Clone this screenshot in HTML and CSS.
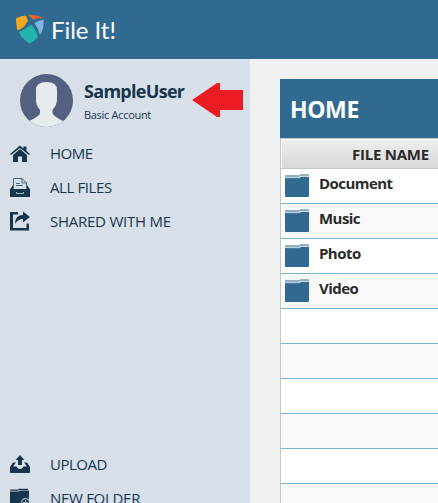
FILE: index.html
```html
<!DOCTYPE html>
<html lang="en">
<head>
<meta charset="utf-8">
<title>File It!</title>
<link rel="stylesheet" href="styles.css">
</head>
<body>
<svg class="defs" aria-hidden="true">
  <symbol id="folder" viewBox="0 0 24 23">
    <path fill="#93afc0" d="M0 2Q0 1 1 1H15V0H23Q24 0 24 1V5H0Z"/>
    <path fill="#c5dce4" d="M0 3.2H14L15 2H24V3H16L15 4H0Z"/>
    <path fill="#316a91" d="M0 4.2H14.5L16 3H24V22Q24 23 23 23H1Q0 23 0 22Z"/>
  </symbol>
</svg>
<header class="topbar">
  <svg class="logo" viewBox="0 0 28 29">
    <path fill="#f4a91c" d="M0 3.5Q5 .5 10 .5L12 6 8 11.500Q5 14 1.500 15.500Q-.2 9 0 3.500Z"/>
    <path fill="#ee6425" d="M12 0Q21-.5 27.500 3Q21 3 17 4.500Z"/>
    <path fill="#7db4e3" d="M27.500 4.500Q28.500 13 24 20Q22 13 18.500 8Q23 5 27.500 4.500Z"/>
    <path fill="#23b5ac" d="M3 17Q10 14 15 9.500Q20 14 22 22Q18 26 13.500 28.500Q6 24 3 17Z"/>
  </svg>
  <span class="brand">File It!</span>
</header>
<div class="layout">
  <aside class="sidebar">
    <div class="profile">
      <svg class="avatar" viewBox="0 0 53 53">
        <defs><clipPath id="round"><circle cx="26.500" cy="26.500" r="26.500"/></clipPath></defs>
        <g clip-path="url(#round)">
          <path fill="#555f80" d="M0 0H53V53H0Z"/>
          <path fill="#e6eced" d="M20 43V36Q15.500 31 16 25V16Q16 8 26.500 8T37 16V25Q37 31 32.500 36V39Q33 42 43 47V53H9V47Q20 42 20 39Z"/>
        </g>
      </svg>
      <div class="identity">
        <div class="username">SampleUser</div>
        <div class="plan">Basic Account</div>
      </div>
      <svg class="arrow" viewBox="0 0 52 36"><path fill="#ed1c24" d="M0 18 25 1H28V8H51V28H28V35H25Z"/></svg>
    </div>
    <nav class="menu">
      <a class="item"><svg class="icon" viewBox="0 0 20 20"><path d="M3 12 10 6 17 12V19H12V13.500H8V19H3Z"/><path d="M0 11 10 2.500 13.500 5.500V3.500H16.500V8L20 11 19 12 10 5 1 12Z"/></svg><span class="t-home">HOME</span></a>
      <a class="item"><svg class="icon" viewBox="0 0 20 20"><path d="M1 11 3 8V11H17V8L19 11 20 12V20H0V12Z"/><path class="paper" d="M3.500 12V1.500H12L16.500 6V12"/><path class="thin" d="M12 1.500V6H16.500M6 6.500H10M6 8.500H13"/><path d="M0 12H6L7 13.500H13L14 12H20V20H0Z"/><path class="light" d="M6.500 15V16.500H13.500V15"/></svg><span class="t-all">ALL FILES</span></a>
      <a class="item"><svg class="icon" viewBox="0 0 20 20"><path d="M0 1H8V3.500H3V17H16.500V12.500H19V19.500H0Z"/><path d="M5 13Q5 4 13 4V.5L20 6 13 11.500V8Q8 8 5 13Z"/></svg><span class="t-shared">SHARED WITH ME</span></a>
      <a class="item push"><svg class="icon" viewBox="0 0 20 20"><path d="M10 1 14.500 6H12V11H8V6H5.500Z"/><path d="M0 13 3 8.500H6L3 12.500H6.500Q7.500 15 10 15T13.500 12.500H17L14 8.500H17L20 13V18Q20 19 19 19H1Q0 19 0 18Z"/></svg><span class="t-upload">UPLOAD</span></a>
      <a class="item"><svg class="icon" viewBox="0 0 20 20"><path d="M0 1.500H8L9 .8H18V2H9L8 2.800H0Z"/><path d="M0 3.500H8.500L9.500 2.600H19V20H0Z"/><circle class="badge" cx="15.500" cy="14.500" r="4"/><path class="light" d="M15.500 12V17M13 14.500H18"/></svg><span class="t-new">NEW FOLDER</span></a>
    </nav>
  </aside>
  <main class="content">
    <h1 class="title"><span>HOME</span></h1>
    <div class="table">
      <div class="thead"><span>FILE NAME</span></div>
      <div class="row"><svg class="folder"><use href="#folder"/></svg><span>Document</span></div>
      <div class="row"><svg class="folder"><use href="#folder"/></svg><span>Music</span></div>
      <div class="row"><svg class="folder"><use href="#folder"/></svg><span>Photo</span></div>
      <div class="row"><svg class="folder"><use href="#folder"/></svg><span>Video</span></div>
      <div class="row"></div>
      <div class="row"></div>
      <div class="row"></div>
      <div class="row"></div>
      <div class="row"></div>
      <div class="row"></div>
    </div>
  </main>
</div>
</body>
</html>
```
FILE: styles.css
```css
* { box-sizing: border-box; }
html, body { height: 503px; overflow: hidden; }
body { margin: 0; background: #f0f2f1; color: #17364d; font-family: "Open Sans", "Noto Sans", sans-serif; white-space: nowrap; }
svg { display: block; flex: none; }
.defs { display: none; }
.topbar { height: 59px; background: #316a91; display: flex; padding: 15px 0 0 16px; }
.logo { width: 28px; height: 29px; }
.brand { margin-left: 7px; color: #fff; font: 400 24px/29px Lato, sans-serif; letter-spacing: -0.05px; }
.layout { display: flex; height: 444px; }
.sidebar { width: 250px; flex: none; background: #d7e0e8; }
.profile { height: 77px; padding: 15px 0 0 20px; display: flex; }
.avatar { width: 53px; height: 53px; }
.identity { width: 108px; margin-left: 11px; }
.username { margin-top: 5px; font-size: 18px; line-height: 24px; font-weight: 700; letter-spacing: -0.7px; }
.plan { margin-top: 5px; font-size: 11px; line-height: 14px; letter-spacing: -0.3px; }
.arrow { width: 52px; height: 36px; margin-top: 8px; }
.menu { font-size: 15px; letter-spacing: -0.5px; }
.item { display: flex; align-items: center; height: 34px; padding-left: 10px; }
.item span { margin-left: 20px; }
.push { margin-top: 209px; }
.icon { width: 20px; height: 20px; fill: #17364d; }
.paper { fill: #d7e0e8; stroke: #47637a; stroke-width: 1; }
.thin { fill: none; stroke: #47637a; stroke-width: 1; }
.light { fill: none; stroke: #a8b8c4; stroke-width: 1; }
.badge { stroke: #d7e0e8; }
.t-all { letter-spacing: -0.4px; }
.t-shared { letter-spacing: -0.25px; }
.t-new { letter-spacing: -0.3px; }
.content { flex: 1; min-width: 0; margin: 20px 0 0 30px; }
.title { margin: 0; height: 59px; background: #316a91; color: #fff; padding-left: 10px; font-size: 23px; line-height: 60px; font-weight: 700; letter-spacing: -0.4px; }
.table { border-left: 1px solid #c4c6c8; color: #2a2a2a; font-size: 15px; font-weight: 700; }
.thead { height: 31px; border: solid #c4c6c8; border-width: 1px 0; background: linear-gradient(#eeeeee, #d9d9d9); box-shadow: inset 1px 1px #fafafa; padding-left: 71px; line-height: 30px; letter-spacing: -0.25px; }
.row { height: 35px; border-bottom: 1px solid #78b2db; background: #fff; display: flex; padding: 5px 0 0 4px; line-height: 18px; letter-spacing: -0.55px; }
.row:nth-child(odd) { background: #f9f9f9; }
.folder { width: 24px; height: 23px; margin-right: 10px; }
```
